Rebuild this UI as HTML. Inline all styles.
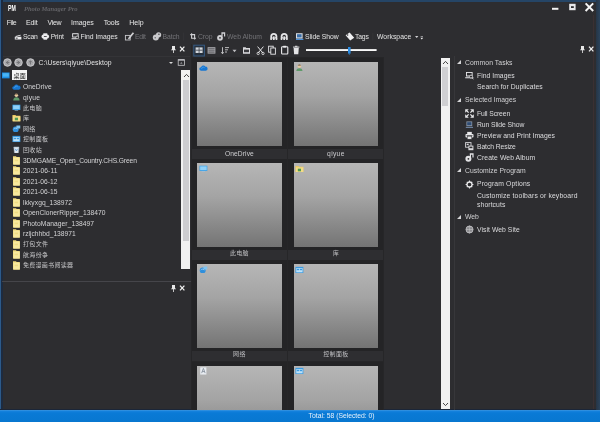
<!DOCTYPE html>
<html lang="zh">
<head>
<meta charset="utf-8">
<title>Photo Manager Pro</title>
<style>
*{box-sizing:border-box;margin:0;padding:0}
html,body{width:600px;height:422px;overflow:hidden;background:#2d2d30}
body{position:relative;font-family:"Liberation Sans","Noto Sans CJK SC",sans-serif;font-size:7px;color:#dcdcdc;line-height:1.15}
.abs{position:absolute}
.t{position:absolute;white-space:nowrap}
#txt{position:absolute;left:0;top:0;width:600px;height:422px;will-change:transform}
#win{position:absolute;left:0;top:0;width:600px;height:422px;background:#2d2d30;overflow:hidden}
.sb{background:#f1f1f1}
.thumb{position:absolute;width:84.6px;height:84.2px;background:linear-gradient(#b6b6b6,#a4a4a4 40%,#747474)}
.cell{position:absolute;width:95.2px;height:91px;background:#242426}
.tri{position:absolute;left:456.8px;width:0;height:0;border-left:4.2px solid transparent;border-bottom:4.2px solid #d4d4d6}
</style>
</head>
<body>
<div id="win">
<div class="abs" style="left:0;top:0;width:600px;height:1.5px;background:#254566"></div>
<div class="abs" style="left:0;top:0;width:1.2px;height:422px;background:#2c5a8a"></div>
<div class="abs" style="left:1.2px;top:0;width:1.8px;height:410px;background:#1d2b40"></div>
<div class="abs" style="left:0;top:408.6px;width:600px;height:1.6px;background:#1b2638"></div>
<div class="abs" style="left:595.5px;top:0;width:4.5px;height:422px;background:linear-gradient(90deg,#263545,#2a435c)"></div>
<div class="abs" style="left:593.2px;top:15px;width:1px;height:394px;background:#3b3032"></div>
<svg class="abs" style="left:550px;top:2px" width="46" height="12" viewBox="0 0 46 12"><rect x="2" y="5.8" width="6.4" height="2" fill="#f2f2f2"/><rect x="19.2" y="1.8" width="6.4" height="6.4" fill="#e9e9eb"/><rect x="21" y="4.2" width="2.8" height="1.8" fill="#2d2d30"/><path d="M35.6 1.4l7.6 7.6m0-7.6l-7.6 7.6" stroke="#f6f6f6" stroke-width="2"/></svg>
<svg class="abs" style="left:0;top:29px" width="430" height="15" viewBox="0 0 430 15">
<g fill="#ececee">
<path d="M14.8 7.8h6.6v2.8h-6.6zM15.6 6.9l5-1.2.25.8-5 1.2z"/><rect x="15.7" y="8.7" width="2" height=".9" fill="#2d2d30"/>
<ellipse cx="45.3" cy="7.5" rx="3.8" ry="2.3"/><rect x="43.3" y="4.3" width="4" height="1.8"/><rect x="43.5" y="8" width="3.6" height="2.7"/><rect x="43.9" y="7" width="2.8" height=".8" fill="#2d2d30"/>
<path d="M72.2 4.3h6.4v4.2h-6.4zM71.6 9.2h5v1.1h-5z"/><rect x="73.1" y="5.2" width="4.6" height="2.4" fill="#2d2d30"/><circle cx="77.2" cy="8.4" r="1.4" fill="#2d2d30" stroke="#ececee" stroke-width=".7"/><path d="M78.1 9.5l1 1" stroke="#ececee" stroke-width=".8"/>
</g>
<g fill="#9a9a9e">
<rect x="125.4" y="6.4" width="4.8" height="4.6" fill="none" stroke="#c8c8cb" stroke-width=".9"/><path d="M128.4 8.8l4.4-5.6 1.3 1-4.4 5.6-1.7.5z" fill="#d2d2d5"/>
<circle cx="155.8" cy="8.4" r="3" fill="#c9c9cc"/><circle cx="158.6" cy="5.8" r="2.6" fill="#c9c9cc"/><circle cx="158.9" cy="5.3" r=".8" fill="#4a4a4e"/><circle cx="155.2" cy="8.8" r=".7" fill="#5a5a5e"/>
<path d="M191.6 4.2v5h4.4M190.2 5.6h4.4v4.8" fill="none" stroke="#cfcfd2" stroke-width="1.1"/>
<circle cx="220" cy="8.8" r="2.9" fill="#d0d0d3"/><path d="M221.4 3.2h3.8v4.4h-1.2V4.8h-1.4v2.4h-1.2z" fill="#d0d0d3"/><circle cx="220" cy="8.8" r=".9" fill="#2d2d30"/>
</g>
<g fill="#e6e6e8">
<path d="M270.3 7.4a3.5 3.5 0 0 1 7 0v2h-7z"/><circle cx="273.8" cy="7.4" r="1.7" fill="#2d2d30"/><rect x="272.9" y="7.4" width="1.8" height="3.6" fill="#e6e6e8"/><rect x="270.3" y="9" width="1.6" height="2" /><rect x="275.7" y="9" width="1.6" height="2"/>
<path d="M280.7 7.4a3.5 3.5 0 0 1 7 0v2h-7z"/><circle cx="284.2" cy="7.4" r="1.7" fill="#2d2d30"/><rect x="283.3" y="7.4" width="1.8" height="3.6" fill="#e6e6e8"/><rect x="280.7" y="9" width="1.6" height="2"/><rect x="286.1" y="9" width="1.6" height="2"/>
</g>
<path d="M296 4.2h6.6v5.4H296z" fill="#d8dde4"/><path d="M296 10.4h7.4" stroke="#4a90d9" stroke-width="1.2"/><rect x="297" y="5.2" width="4.6" height="3.2" fill="#3a6ea8"/>
<path d="M345.6 6.2l4-2.6 4.6 5.2-4 2.8z" fill="#f0f0f2"/><circle cx="347.6" cy="6" r=".8" fill="#2d2d30"/>
<path d="M415 7h3.4l-1.7 2z" fill="#d0d0d3"/>
<path d="M420.4 8.8h2.8l-1.4 1.8z" fill="#f2f2f4"/><rect x="420.6" y="7" width="2.4" height=".7" fill="#b8b8bc"/>
<rect x="183.5" y="3.6" width=".6" height="8" fill="#38383b"/>
<rect x="291.6" y="3.6" width=".6" height="8" fill="#38383b"/>
<rect x="372.6" y="3.6" width=".6" height="8" fill="#38383b"/>
</svg>
<svg class="abs" style="left:170px;top:45px" width="16" height="9" viewBox="0 0 16 9"><path d="M2 1h3v3.4h.9v.9H3.9V8h-.8V5.3H1.1v-.9H2z" fill="#e8e8e8"/><path d="M10 1.6l4.4 4.8m0-4.8L10 6.4" stroke="#f0f0f0" stroke-width="1.3"/></svg>
<svg class="abs" style="left:2.8px;top:58px" width="9" height="9" viewBox="0 0 9 9"><circle cx="4.5" cy="4.5" r="3.8" fill="#a9a9ac" stroke="#cdcdd0" stroke-width=".9"/><path d="M5.6 2.8L3.2 4.5l2.4 1.7M3.4 4.5h3" stroke="#707074" stroke-width=".9" fill="none"/></svg>
<svg class="abs" style="left:14.399999999999999px;top:58px" width="9" height="9" viewBox="0 0 9 9"><circle cx="4.5" cy="4.5" r="3.8" fill="#a9a9ac" stroke="#cdcdd0" stroke-width=".9"/><path d="M3.4 2.8l2.4 1.7-2.4 1.7M2.6 4.5h3" stroke="#707074" stroke-width=".9" fill="none"/></svg>
<svg class="abs" style="left:25.9px;top:58px" width="9" height="9" viewBox="0 0 9 9"><circle cx="4.5" cy="4.5" r="3.8" fill="#a9a9ac" stroke="#cdcdd0" stroke-width=".9"/><path d="M4.5 6.4V3M2.9 4.4l1.6-1.6 1.6 1.6" stroke="#707074" stroke-width=".9" fill="none"/></svg>
<div class="abs" style="left:169px;top:61.5px;width:0;height:0;border-left:2.2px solid transparent;border-right:2.2px solid transparent;border-top:2.6px solid #d8d8d8"></div>
<svg class="abs" style="left:177px;top:58px" width="9" height="9" viewBox="0 0 9 9"><rect x="1.2" y="1.7" width="6.2" height="5.6" fill="none" stroke="#c6c6c9" stroke-width=".8"/><rect x="1.2" y="1.4" width="6.2" height="1.2" fill="#c6c6c9"/><path d="M3.1 5.6h2.4L4.3 4.2z" fill="#c6c6c9"/></svg>
<svg class="abs" style="left:2.2px;top:72.2px" width="7.6" height="7.6" viewBox="0 0 8 8"><rect x="0" y=".5" width="8" height="6.2" fill="#1d8ee6"/><rect x=".8" y="1.3" width="6.4" height="3.6" fill="#49b4f5"/></svg>
<div class="abs" style="left:12.3px;top:70.3px;width:14.9px;height:9.5px;background:#f4f4f4"></div>
<svg class="abs" style="left:11.8px;top:82.6px" width="8.8" height="7.9" viewBox="0 0 10 9"><path d="M2.2 7.6a2 2 0 0 1 .2-4 2.6 2.6 0 0 1 4.8-.6 2.3 2.3 0 0 1 .6 4.6z" fill="#1877d2"/><path d="M3 5.6a2 2 0 0 1 3.4-1.4" stroke="#5fb0f0" stroke-width=".7" fill="none"/></svg>
<svg class="abs" style="left:11.8px;top:93.1px" width="8.8" height="7.9" viewBox="0 0 10 9"><circle cx="5" cy="2.6" r="2" fill="#e6c9a0"/><path d="M1.4 8.6c0-3 1.6-3.8 3.6-3.8s3.6.8 3.6 3.8z" fill="#5f9a6a"/><path d="M3.2 1.8a2 2 0 0 1 3.6 0z" fill="#5a4632"/></svg>
<svg class="abs" style="left:11.8px;top:103.6px" width="8.8" height="7.9" viewBox="0 0 10 9"><rect x=".5" y=".8" width="9" height="6" fill="#3fa3e8"/><rect x="1.3" y="1.6" width="7.4" height="4.2" fill="#8fd0f7"/><rect x="3" y="7.4" width="4" height="1" fill="#9cc7e6"/></svg>
<svg class="abs" style="left:11.8px;top:114.1px" width="8.8" height="7.9" viewBox="0 0 10 9"><path d="M.5 1h3.4l.8 1H9.5v6.4h-9z" fill="#e9c85f"/><rect x="1" y="2.6" width="8.5" height="5.8" fill="#f3dc87"/><rect x="3.2" y="4.2" width="3.6" height="3" fill="#4e9a54"/></svg>
<svg class="abs" style="left:11.8px;top:124.6px" width="8.8" height="7.9" viewBox="0 0 10 9"><circle cx="4.2" cy="5" r="3.4" fill="#2f8fdc"/><rect x="5" y=".6" width="4.4" height="3.4" fill="#7ec4f2"/><path d="M2 4.6c1-1.4 3-1.4 4 .2" stroke="#bfe3fa" stroke-width=".8" fill="none"/></svg>
<svg class="abs" style="left:11.8px;top:135.1px" width="8.8" height="7.9" viewBox="0 0 10 9"><rect x=".5" y="1" width="9" height="7" fill="#3b9be2"/><rect x="1.4" y="2.4" width="7.2" height="4.8" fill="#bfe2f8"/><rect x="2" y="3.2" width="2.6" height="1.6" fill="#3b9be2"/><rect x="5.4" y="3.2" width="2.6" height="1.6" fill="#3b9be2"/></svg>
<svg class="abs" style="left:11.8px;top:145.6px" width="8.8" height="7.9" viewBox="0 0 10 9"><path d="M2 1.2h6l-.8 7.2H2.8z" fill="#dfe7ee" stroke="#9fb2c4" stroke-width=".6"/><path d="M3.6 3.2l1.4 2.4 1.4-2.4" stroke="#3b8fd8" stroke-width=".7" fill="none"/></svg>
<svg class="abs" style="left:13.2px;top:155.5px" width="7" height="9" viewBox="0 0 7 9"><path d="M0 .3h3l.6.7H6.8v7.6H0z" fill="#efd878"/><rect x=".4" y="1.6" width="6.4" height="7" fill="#f7e89e"/><rect x="1.6" y="3.6" width="3.4" height="1.6" fill="#efdc84"/></svg>
<svg class="abs" style="left:13.2px;top:166.0px" width="7" height="9" viewBox="0 0 7 9"><path d="M0 .3h3l.6.7H6.8v7.6H0z" fill="#efd878"/><rect x=".4" y="1.6" width="6.4" height="7" fill="#f7e89e"/><rect x="1.6" y="3.6" width="3.4" height="1.6" fill="#efdc84"/></svg>
<svg class="abs" style="left:13.2px;top:176.5px" width="7" height="9" viewBox="0 0 7 9"><path d="M0 .3h3l.6.7H6.8v7.6H0z" fill="#efd878"/><rect x=".4" y="1.6" width="6.4" height="7" fill="#f7e89e"/><rect x="1.6" y="3.6" width="3.4" height="1.6" fill="#efdc84"/></svg>
<svg class="abs" style="left:13.2px;top:187.0px" width="7" height="9" viewBox="0 0 7 9"><path d="M0 .3h3l.6.7H6.8v7.6H0z" fill="#efd878"/><rect x=".4" y="1.6" width="6.4" height="7" fill="#f7e89e"/><rect x="1.6" y="3.6" width="3.4" height="1.6" fill="#efdc84"/></svg>
<svg class="abs" style="left:13.2px;top:197.5px" width="7" height="9" viewBox="0 0 7 9"><path d="M0 .3h3l.6.7H6.8v7.6H0z" fill="#efd878"/><rect x=".4" y="1.6" width="6.4" height="7" fill="#f7e89e"/><rect x="1.6" y="3.6" width="3.4" height="1.6" fill="#efdc84"/></svg>
<svg class="abs" style="left:13.2px;top:208.0px" width="7" height="9" viewBox="0 0 7 9"><path d="M0 .3h3l.6.7H6.8v7.6H0z" fill="#efd878"/><rect x=".4" y="1.6" width="6.4" height="7" fill="#f7e89e"/><rect x="1.6" y="3.6" width="3.4" height="1.6" fill="#efdc84"/></svg>
<svg class="abs" style="left:13.2px;top:218.5px" width="7" height="9" viewBox="0 0 7 9"><path d="M0 .3h3l.6.7H6.8v7.6H0z" fill="#efd878"/><rect x=".4" y="1.6" width="6.4" height="7" fill="#f7e89e"/><rect x="1.6" y="3.6" width="3.4" height="1.6" fill="#efdc84"/></svg>
<svg class="abs" style="left:13.2px;top:229.0px" width="7" height="9" viewBox="0 0 7 9"><path d="M0 .3h3l.6.7H6.8v7.6H0z" fill="#efd878"/><rect x=".4" y="1.6" width="6.4" height="7" fill="#f7e89e"/><rect x="1.6" y="3.6" width="3.4" height="1.6" fill="#efdc84"/></svg>
<svg class="abs" style="left:13.2px;top:239.5px" width="7" height="9" viewBox="0 0 7 9"><path d="M0 .3h3l.6.7H6.8v7.6H0z" fill="#efd878"/><rect x=".4" y="1.6" width="6.4" height="7" fill="#f7e89e"/><rect x="1.6" y="3.6" width="3.4" height="1.6" fill="#efdc84"/></svg>
<svg class="abs" style="left:13.2px;top:250.0px" width="7" height="9" viewBox="0 0 7 9"><path d="M0 .3h3l.6.7H6.8v7.6H0z" fill="#efd878"/><rect x=".4" y="1.6" width="6.4" height="7" fill="#f7e89e"/><rect x="1.6" y="3.6" width="3.4" height="1.6" fill="#efdc84"/></svg>
<svg class="abs" style="left:13.2px;top:260.5px" width="7" height="9" viewBox="0 0 7 9"><path d="M0 .3h3l.6.7H6.8v7.6H0z" fill="#efd878"/><rect x=".4" y="1.6" width="6.4" height="7" fill="#f7e89e"/><rect x="1.6" y="3.6" width="3.4" height="1.6" fill="#efdc84"/></svg>
<div class="abs sb" style="left:181.3px;top:69.5px;width:9.2px;height:199.5px"></div>
<div class="abs" style="left:182.6px;top:79.8px;width:6.6px;height:160.8px;background:#cdcdd0"></div>
<svg class="abs" style="left:182.5px;top:72.5px" width="7" height="5" viewBox="0 0 7 5"><path d="M1 4l2.5-2.6L6 4" stroke="#444" stroke-width="1" fill="none"/></svg>
<div class="abs" style="left:2px;top:280.5px;width:188.5px;height:1px;background:#45454a"></div>
<div class="abs" style="left:190.5px;top:44px;width:1px;height:366px;background:#262628"></div>
<svg class="abs" style="left:170px;top:283.5px" width="16" height="9" viewBox="0 0 16 9"><path d="M2 1h3v3.4h.9v.9H3.9V8h-.8V5.3H1.1v-.9H2z" fill="#e8e8e8"/><path d="M10 1.6l4.4 4.8m0-4.8L10 6.4" stroke="#f0f0f0" stroke-width="1.3"/></svg>
<div class="abs" style="left:3px;top:56px;width:187px;height:1px;background:#343437"></div>
<div class="abs" style="left:191.5px;top:56.5px;width:192px;height:354px;background:#262628"></div>
<div class="cell" style="left:191.5px;top:57.9px"></div>
<div class="abs" style="left:191.5px;top:148.7px;width:95.2px;height:10.6px;background:#2e2e31"></div>
<div class="thumb" style="left:197.1px;top:62.1px"></div>
<svg class="abs" style="left:198.9px;top:63.6px" width="8.8" height="7.9" viewBox="0 0 10 9"><path d="M2.2 7.6a2 2 0 0 1 .2-4 2.6 2.6 0 0 1 4.8-.6 2.3 2.3 0 0 1 .6 4.6z" fill="#1877d2"/><path d="M3 5.6a2 2 0 0 1 3.4-1.4" stroke="#5fb0f0" stroke-width=".7" fill="none"/></svg>
<div class="cell" style="left:288.0px;top:57.9px"></div>
<div class="abs" style="left:288.0px;top:148.7px;width:95.2px;height:10.6px;background:#2e2e31"></div>
<div class="thumb" style="left:293.6px;top:62.1px"></div>
<svg class="abs" style="left:295.40000000000003px;top:63.6px" width="8.8" height="7.9" viewBox="0 0 10 9"><circle cx="5" cy="2.6" r="2" fill="#e6c9a0"/><path d="M1.4 8.6c0-3 1.6-3.8 3.6-3.8s3.6.8 3.6 3.8z" fill="#5f9a6a"/><path d="M3.2 1.8a2 2 0 0 1 3.6 0z" fill="#5a4632"/></svg>
<div class="cell" style="left:191.5px;top:158.8px"></div>
<div class="abs" style="left:191.5px;top:249.6px;width:95.2px;height:10.6px;background:#2e2e31"></div>
<div class="thumb" style="left:197.1px;top:163.0px"></div>
<svg class="abs" style="left:198.9px;top:164.5px" width="8.8" height="7.9" viewBox="0 0 10 9"><rect x=".5" y=".8" width="9" height="6" fill="#3fa3e8"/><rect x="1.3" y="1.6" width="7.4" height="4.2" fill="#8fd0f7"/><rect x="3" y="7.4" width="4" height="1" fill="#9cc7e6"/></svg>
<div class="cell" style="left:288.0px;top:158.8px"></div>
<div class="abs" style="left:288.0px;top:249.6px;width:95.2px;height:10.6px;background:#2e2e31"></div>
<div class="thumb" style="left:293.6px;top:163.0px"></div>
<svg class="abs" style="left:295.40000000000003px;top:164.5px" width="8.8" height="7.9" viewBox="0 0 10 9"><path d="M.5 1h3.4l.8 1H9.5v6.4h-9z" fill="#e9c85f"/><rect x="1" y="2.6" width="8.5" height="5.8" fill="#f3dc87"/><rect x="3.2" y="4.2" width="3.6" height="3" fill="#4e9a54"/></svg>
<div class="cell" style="left:191.5px;top:259.8px"></div>
<div class="abs" style="left:191.5px;top:350.6px;width:95.2px;height:10.6px;background:#2e2e31"></div>
<div class="thumb" style="left:197.1px;top:264.0px"></div>
<svg class="abs" style="left:198.9px;top:265.5px" width="8.8" height="7.9" viewBox="0 0 10 9"><circle cx="4.2" cy="5" r="3.4" fill="#2f8fdc"/><rect x="5" y=".6" width="4.4" height="3.4" fill="#7ec4f2"/><path d="M2 4.6c1-1.4 3-1.4 4 .2" stroke="#bfe3fa" stroke-width=".8" fill="none"/></svg>
<div class="cell" style="left:288.0px;top:259.8px"></div>
<div class="abs" style="left:288.0px;top:350.6px;width:95.2px;height:10.6px;background:#2e2e31"></div>
<div class="thumb" style="left:293.6px;top:264.0px"></div>
<svg class="abs" style="left:295.40000000000003px;top:265.5px" width="8.8" height="7.9" viewBox="0 0 10 9"><rect x=".5" y="1" width="9" height="7" fill="#3b9be2"/><rect x="1.4" y="2.4" width="7.2" height="4.8" fill="#bfe2f8"/><rect x="2" y="3.2" width="2.6" height="1.6" fill="#3b9be2"/><rect x="5.4" y="3.2" width="2.6" height="1.6" fill="#3b9be2"/></svg>
<div class="cell" style="left:191.5px;top:361.5px"></div>
<div class="abs" style="left:191.5px;top:452.3px;width:95.2px;height:10.6px;background:#2e2e31"></div>
<div class="thumb" style="left:197.1px;top:365.7px"></div>
<svg class="abs" style="left:198.9px;top:367.20000000000005px" width="8.8" height="7.9" viewBox="0 0 10 9"><rect x="1.4" y=".4" width="7" height="8.2" fill="#e9edf2"/><path d="M3 7l2-5.4L7 7M3.7 5.2h2.6" stroke="#7d8894" stroke-width=".9" fill="none"/></svg>
<div class="cell" style="left:288.0px;top:361.5px"></div>
<div class="abs" style="left:288.0px;top:452.3px;width:95.2px;height:10.6px;background:#2e2e31"></div>
<div class="thumb" style="left:293.6px;top:365.7px"></div>
<svg class="abs" style="left:295.40000000000003px;top:367.20000000000005px" width="8.8" height="7.9" viewBox="0 0 10 9"><rect x=".5" y="1" width="9" height="7" fill="#3b9be2"/><rect x="1.4" y="2.4" width="7.2" height="4.8" fill="#bfe2f8"/><rect x="2" y="3.2" width="2.6" height="1.6" fill="#3b9be2"/><rect x="5.4" y="3.2" width="2.6" height="1.6" fill="#3b9be2"/></svg>
<svg class="abs" style="left:191px;top:44px" width="200" height="13" viewBox="0 0 200 13">
<rect x="2.8" y="1.2" width="10.6" height="10.8" fill="#26303c" stroke="#365a82" stroke-width="1"/>
<rect x="4.6" y="3.4" width="7" height="5.6" fill="#d4d8dd"/><path d="M8.1 3.4v5.6M4.6 6.2h7" stroke="#3a4049" stroke-width=".8"/>
<rect x="17" y="3.6" width="7" height="5.6" fill="#6c6c70" stroke="#a8a8ac" stroke-width=".8"/><path d="M17 5.4h7M17 7.2h7" stroke="#a8a8ac" stroke-width=".6"/>
<path d="M31.5 3.2v6.4M30.3 8.2l1.2 1.6 1.2-1.6M34 3.6h4M34 5.8h3M34 8h2" stroke="#c9c9cc" stroke-width=".9" fill="none"/>
<path d="M41.5 5.8h4l-2 2.4z" fill="#bdbdc0"/>
<path d="M52 3.2h2.6l.7.9H59v5.6h-7z" fill="#d9d9dc"/><rect x="53" y="5.6" width="5" height="2.6" fill="#3a3a3e"/>
<path d="M66.6 2.6l5.4 6.6M72.4 2.6L67 9.2" stroke="#e4e4e6" stroke-width="1"/><circle cx="67.2" cy="9.4" r="1.2" fill="none" stroke="#e4e4e6" stroke-width=".8"/><circle cx="72" cy="9.4" r="1.2" fill="none" stroke="#e4e4e6" stroke-width=".8"/>
<rect x="77.6" y="2.2" width="4.6" height="6" fill="none" stroke="#e6e6e8" stroke-width=".9"/><rect x="79.8" y="4" width="4.6" height="6.2" fill="#2d2d30" stroke="#e6e6e8" stroke-width=".9"/>
<rect x="90.6" y="2.8" width="6.2" height="7.2" rx=".8" fill="none" stroke="#ececee" stroke-width="1.1"/><rect x="92.2" y="1.8" width="3" height="1.8" fill="#ececee"/>
<path d="M102.6 4h5.2l-.5 6.2h-4.2z" fill="#e4e4e6"/><rect x="102" y="2.6" width="6.4" height="1" fill="#e4e4e6"/><rect x="104" y="1.8" width="2.4" height="1" fill="#e4e4e6"/>
<rect x="115" y="5.1" width="70.6" height="1.9" fill="#f8f8f8"/>
<rect x="157" y="3" width="2.6" height="6.4" fill="#2b8be0"/><path d="M157 9.4h2.6l-1.3 1.4z" fill="#2b8be0"/>
</svg>
<div class="abs sb" style="left:440.5px;top:57.5px;width:9.5px;height:351px"></div>
<div class="abs" style="left:442px;top:66.7px;width:6.4px;height:39px;background:#cfcfd2"></div>
<svg class="abs" style="left:442px;top:60px" width="7" height="5" viewBox="0 0 7 5"><path d="M1 4l2.5-2.6L6 4" stroke="#444" stroke-width="1" fill="none"/></svg>
<svg class="abs" style="left:442px;top:402px" width="7" height="5" viewBox="0 0 7 5"><path d="M1 1l2.5 2.6L6 1" stroke="#444" stroke-width="1" fill="none"/></svg>
<svg class="abs" style="left:579px;top:45px" width="16" height="9" viewBox="0 0 16 9"><path d="M2 1h3v3.4h.9v.9H3.9V8h-.8V5.3H1.1v-.9H2z" fill="#e8e8e8"/><path d="M10 1.6l4.4 4.8m0-4.8L10 6.4" stroke="#f0f0f0" stroke-width="1.3"/></svg>
<div class="abs" style="left:454px;top:56px;width:1px;height:354px;background:#37373a"></div>
<div class="tri" style="top:60.2px"></div>
<div class="tri" style="top:97.5px"></div>
<div class="tri" style="top:168.2px"></div>
<div class="tri" style="top:214.6px"></div>
<svg class="abs" style="left:465px;top:71.0px" width="9" height="9" viewBox="0 0 9 9"><path d="M1 1h6.6v4.4H1zM.2 6.2h8.2v1H.2z" fill="#e8e8ea"/><rect x="1.9" y="1.9" width="4.8" height="2.6" fill="#2d2d30"/><circle cx="6" cy="5.6" r="1.5" fill="#2d2d30" stroke="#e8e8ea" stroke-width=".7"/><path d="M7 6.8l1.4 1.5" stroke="#e8e8ea" stroke-width=".8"/></svg>
<svg class="abs" style="left:465px;top:108.5px" width="9" height="9" viewBox="0 0 9 9"><path d="M.2.2h3.6L.2 3.8zM8.8.2H5.2l3.6 3.6zM.2 8.8h3.6L.2 5.2zM8.8 8.8H5.2l3.6-3.6z" fill="#e8e8ea"/><path d="M1.6 1.6l2 2M7.4 1.6l-2 2M1.6 7.4l2-2M7.4 7.4l-2-2" stroke="#e8e8ea" stroke-width="1.3"/></svg>
<svg class="abs" style="left:465px;top:119.5px" width="9" height="9" viewBox="0 0 9 9"><path d="M1.4 1.4h5.8v4.8H1.4z" fill="#8794a6"/><rect x="2.2" y="2.2" width="4.2" height="3" fill="#2f4c74"/><path d="M.8 7.4h7.2" stroke="#6f84a2" stroke-width="1.1"/></svg>
<svg class="abs" style="left:465px;top:130.5px" width="9" height="9" viewBox="0 0 9 9"><rect x="2.2" y=".9" width="4.6" height="2.2" fill="#e8e8ea"/><rect x=".5" y="3" width="8" height="3.6" rx=".8" fill="#e8e8ea"/><rect x="2.2" y="5.4" width="4.6" height="2.8" fill="#e8e8ea" stroke="#2d2d30" stroke-width=".5"/><rect x="1.6" y="4" width="5.8" height=".7" fill="#2d2d30"/></svg>
<svg class="abs" style="left:465px;top:141.5px" width="9" height="9" viewBox="0 0 9 9"><rect x=".6" y=".6" width="5.4" height="4.6" fill="none" stroke="#d9d9dc" stroke-width=".9"/><rect x="3.4" y="3.6" width="5" height="4.6" fill="#d9d9dc"/><rect x="4.4" y="4.6" width="3" height="1.6" fill="#2d2d30"/><rect x="1.7" y="1.7" width="2" height="1.4" fill="#d9d9dc"/></svg>
<svg class="abs" style="left:465px;top:152.5px" width="9" height="9" viewBox="0 0 9 9"><circle cx="3.4" cy="5.8" r="3" fill="#e2e2e4"/><circle cx="3.4" cy="5.8" r=".9" fill="#2d2d30"/><path d="M4.8.3h3.8v4.2H7.4V1.8H6V4H4.8z" fill="#e2e2e4"/></svg>
<svg class="abs" style="left:465px;top:179.5px" width="9" height="9" viewBox="0 0 9 9"><circle cx="4.5" cy="4.5" r="2.5" fill="none" stroke="#e8e8ea" stroke-width="1.3"/><path d="M4.5.6v1.4M4.5 7v1.4M.6 4.5H2M7 4.5h1.4M1.8 1.8l1 1M6.2 6.2l1 1M7.2 1.8l-1 1M2.8 6.2l-1 1" stroke="#e8e8ea" stroke-width="1.1"/></svg>
<svg class="abs" style="left:465px;top:225.3px" width="9" height="9" viewBox="0 0 9 9"><circle cx="4.5" cy="4.5" r="3.5" fill="#77777b" stroke="#c4c4c7" stroke-width=".9"/><path d="M1 4.5h7M4.5 1v7" stroke="#c4c4c7" stroke-width=".6"/><ellipse cx="4.5" cy="4.5" rx="1.7" ry="3.5" fill="none" stroke="#c4c4c7" stroke-width=".5"/></svg>
<div class="abs" style="left:0;top:410px;width:600px;height:12px;background:linear-gradient(#3b95e0 0,#1380dc 1.5px,#0a7ad6 3px,#0877d0)"></div>
<div id="txt">
<div class="t" id="t0" style="left:6.7px;top:18.98px;font-size:7.0px;color:#e8e8e8;letter-spacing:-0.445px;">File</div>
<div class="t" id="t1" style="left:26px;top:18.98px;font-size:7.0px;color:#e8e8e8;letter-spacing:-0.141px;">Edit</div>
<div class="t" id="t2" style="left:47.5px;top:18.98px;font-size:7.0px;color:#e8e8e8;letter-spacing:-0.337px;">View</div>
<div class="t" id="t3" style="left:71px;top:18.98px;font-size:7.0px;color:#e8e8e8;letter-spacing:-0.045px;">Images</div>
<div class="t" id="t4" style="left:103.7px;top:18.98px;font-size:7.0px;color:#e8e8e8;letter-spacing:-0.109px;">Tools</div>
<div class="t" id="t5" style="left:129.2px;top:18.98px;font-size:7.0px;color:#e8e8e8;letter-spacing:0.023px;">Help</div>
<div class="t" id="t6" style="left:23px;top:33.19px;font-size:6.8px;color:#e4e4e4;letter-spacing:-0.25px;">Scan</div>
<div class="t" id="t7" style="left:50.7px;top:33.19px;font-size:6.8px;color:#e4e4e4;letter-spacing:-0.197px;">Print</div>
<div class="t" id="t8" style="left:80.5px;top:33.19px;font-size:6.8px;color:#e4e4e4;letter-spacing:-0.037px;">Find Images</div>
<div class="t" id="t9" style="left:135px;top:33.19px;font-size:6.8px;color:#737377;letter-spacing:-0.255px;">Edit</div>
<div class="t" id="t10" style="left:162.5px;top:33.19px;font-size:6.8px;color:#737377;letter-spacing:-0.078px;">Batch</div>
<div class="t" id="t11" style="left:198px;top:33.19px;font-size:6.8px;color:#737377;letter-spacing:-0.059px;">Crop</div>
<div class="t" id="t12" style="left:227px;top:33.19px;font-size:6.8px;color:#737377;letter-spacing:0.04px;">Web Album</div>
<div class="t" id="t13" style="left:305px;top:33.19px;font-size:6.8px;color:#e4e4e4;letter-spacing:-0.032px;">Slide Show</div>
<div class="t" id="t14" style="left:355px;top:33.19px;font-size:6.8px;color:#e4e4e4;letter-spacing:-0.165px;">Tags</div>
<div class="t" id="t15" style="left:377px;top:33.19px;font-size:6.8px;color:#e4e4e4;letter-spacing:0.036px;">Workspace</div>
<div class="t" id="t16" style="left:38.5px;top:58.69px;font-size:6.8px;color:#e2e2e2;letter-spacing:0.082px;">C:\Users\qiyue\Desktop</div>
<div class="t" id="t17" style="left:23px;top:83.25px;font-size:6.7px;color:#d4d4d6;letter-spacing:0.056px;">OneDrive</div>
<div class="t" id="t18" style="left:23px;top:93.75px;font-size:6.7px;color:#d4d4d6;letter-spacing:0.26px;">qiyue</div>
<div class="t" id="t19" style="left:23px;top:104.65px;font-size:6.0px;color:#c6c6c8;letter-spacing:0.328px;">此电脑</div>
<div class="t" id="t20" style="left:23px;top:115.15px;font-size:6.0px;color:#c6c6c8;letter-spacing:0.284px;">库</div>
<div class="t" id="t21" style="left:23px;top:125.65px;font-size:6.0px;color:#c6c6c8;letter-spacing:0.292px;">网络</div>
<div class="t" id="t22" style="left:23px;top:136.15px;font-size:6.0px;color:#c6c6c8;letter-spacing:0.321px;">控制面板</div>
<div class="t" id="t23" style="left:23px;top:146.65px;font-size:6.0px;color:#c6c6c8;letter-spacing:0.328px;">回收站</div>
<div class="t" id="t24" style="left:23px;top:156.75px;font-size:6.7px;color:#d4d4d6;letter-spacing:-0.105px;">3DMGAME_Open_Country.CHS.Green</div>
<div class="t" id="t25" style="left:23px;top:167.25px;font-size:6.7px;color:#d4d4d6;letter-spacing:0.078px;">2021-06-11</div>
<div class="t" id="t26" style="left:23px;top:177.75px;font-size:6.7px;color:#d4d4d6;letter-spacing:0.028px;">2021-06-12</div>
<div class="t" id="t27" style="left:23px;top:188.25px;font-size:6.7px;color:#d4d4d6;letter-spacing:0.028px;">2021-06-15</div>
<div class="t" id="t28" style="left:23px;top:198.75px;font-size:6.7px;color:#d4d4d6;letter-spacing:0.054px;">lkkyxgq_138972</div>
<div class="t" id="t29" style="left:23px;top:209.25px;font-size:6.7px;color:#d4d4d6;letter-spacing:0.031px;">OpenClonerRipper_138470</div>
<div class="t" id="t30" style="left:23px;top:219.75px;font-size:6.7px;color:#d4d4d6;letter-spacing:0.063px;">PhotoManager_138497</div>
<div class="t" id="t31" style="left:23px;top:230.25px;font-size:6.7px;color:#d4d4d6;letter-spacing:-0.007px;">rzljchhbd_138971</div>
<div class="t" id="t32" style="left:23px;top:241.15px;font-size:6.0px;color:#c6c6c8;letter-spacing:0.321px;">打包文件</div>
<div class="t" id="t33" style="left:23px;top:251.65px;font-size:6.0px;color:#c6c6c8;letter-spacing:0.321px;">航海纷争</div>
<div class="t" id="t34" style="left:23px;top:262.15px;font-size:6.0px;color:#c6c6c8;letter-spacing:0.286px;">免费漫画书阅读器</div>
<div class="t" id="t35" style="left:13.5px;top:71.69px;font-size:6.1px;color:#1e1e1e;letter-spacing:0.206px;">桌面</div>
<div class="t" id="t36" style="left:465px;top:58.79px;font-size:6.8px;color:#d2d2d4;letter-spacing:0.073px;">Common Tasks</div>
<div class="t" id="t37" style="left:465px;top:96.09px;font-size:6.8px;color:#d2d2d4;letter-spacing:0.037px;">Selected Images</div>
<div class="t" id="t38" style="left:465px;top:166.79px;font-size:6.8px;color:#d2d2d4;letter-spacing:0.043px;">Customize Program</div>
<div class="t" id="t39" style="left:465px;top:213.19px;font-size:6.8px;color:#d2d2d4;letter-spacing:0.014px;">Web</div>
<div class="t" id="t40" style="left:477px;top:72.39px;font-size:6.8px;color:#dcdcde;letter-spacing:0.027px;">Find Images</div>
<div class="t" id="t41" style="left:477px;top:83.39px;font-size:6.8px;color:#dcdcde;letter-spacing:0.039px;">Search for Duplicates</div>
<div class="t" id="t42" style="left:477px;top:109.89px;font-size:6.8px;color:#dcdcde;letter-spacing:-0.117px;">Full Screen</div>
<div class="t" id="t43" style="left:477px;top:120.89px;font-size:6.8px;color:#dcdcde;letter-spacing:-0.077px;">Run Slide Show</div>
<div class="t" id="t44" style="left:477px;top:131.89px;font-size:6.8px;color:#dcdcde;letter-spacing:0.019px;">Preview and Print Images</div>
<div class="t" id="t45" style="left:477px;top:142.89px;font-size:6.8px;color:#dcdcde;letter-spacing:-0.104px;">Batch Resize</div>
<div class="t" id="t46" style="left:477px;top:153.89px;font-size:6.8px;color:#dcdcde;letter-spacing:0.086px;">Create Web Album</div>
<div class="t" id="t47" style="left:477px;top:180.29px;font-size:6.8px;color:#dcdcde;letter-spacing:0.135px;">Program Options</div>
<div class="t" id="t48" style="left:477px;top:191.89px;font-size:6.8px;color:#dcdcde;letter-spacing:0.154px;">Customize toolbars or keyboard</div>
<div class="t" id="t49" style="left:477px;top:200.89px;font-size:6.8px;color:#dcdcde;letter-spacing:0.102px;">shortcuts</div>
<div class="t" id="t50" style="left:477px;top:226.49px;font-size:6.8px;color:#dcdcde;letter-spacing:0.046px;">Visit Web Site</div>
<div class="t" id="t51" style="left:224.9px;top:149.85px;font-size:6.7px;color:#cdcdd0;letter-spacing:0.094px;">OneDrive</div>
<div class="t" id="t52" style="left:327.1px;top:149.85px;font-size:6.7px;color:#cdcdd0;letter-spacing:0.32px;">qiyue</div>
<div class="t" id="t53" style="left:229.9px;top:250.35px;font-size:6.0px;color:#bdbdc0;letter-spacing:0.328px;">此电脑</div>
<div class="t" id="t54" style="left:332.75px;top:250.35px;font-size:6.0px;color:#bdbdc0;letter-spacing:0.284px;">库</div>
<div class="t" id="t55" style="left:233.1px;top:351.35px;font-size:6.0px;color:#bdbdc0;letter-spacing:0.292px;">网络</div>
<div class="t" id="t56" style="left:323.25px;top:351.35px;font-size:6.0px;color:#bdbdc0;letter-spacing:0.321px;">控制面板</div>
<div class="t" id="t57" style="left:308.6px;top:412.39px;font-size:6.8px;color:#e6f1fb;letter-spacing:-0.005px;">Total: 58 (Selected: 0)</div>
<div class="t" id="t58" style="left:24px;top:4.61px;font-size:6.6px;color:#636367;letter-spacing:-0.043px;font-family:'Liberation Serif',serif;font-style:italic;font-weight:bold">Photo Manager Pro</div>
<div class="t" id="t59" style="left:8px;top:2.79px;font-size:9.4px;color:#ffffff;transform:scaleX(0.555);transform-origin:0 0;font-weight:bold;font-family:'Liberation Sans',sans-serif">PM</div>
</div>
</div>
</body>
</html>
